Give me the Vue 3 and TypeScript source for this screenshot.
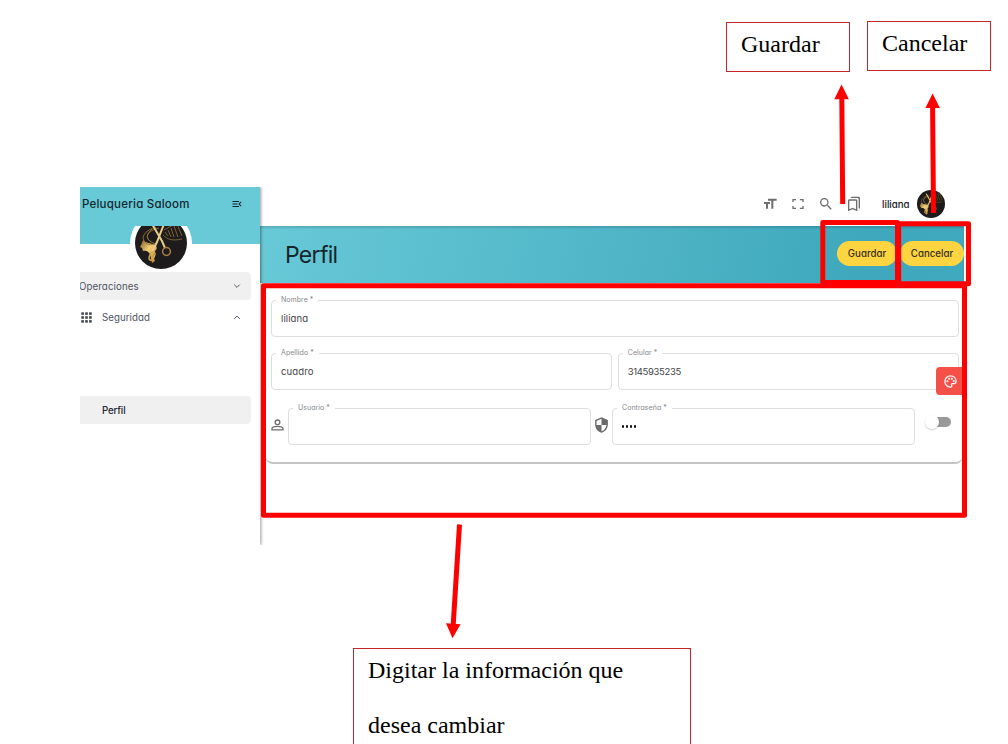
<script setup lang="ts">
interface Note { id: string; lines: string[] }

const notes: Note[] = [
  { id: 'save', lines: ['Guardar'] },
  { id: 'cancel', lines: ['Cancelar'] },
  { id: 'form', lines: ['Digitar la información que', 'desea cambiar'] },
]
const gridDots: number[] = [4, 10, 16]
</script>

<template>
  <div class="page">
    <svg class="defs" width="0" height="0" aria-hidden="true">
      <defs>
        <linearGradient id="gold" x1="0" y1="0" x2="1" y2="1">
          <stop offset="0" stop-color="#7d5a24" />
          <stop offset=".45" stop-color="#f3cf78" />
          <stop offset="1" stop-color="#b17b25" />
        </linearGradient>
        <symbol id="salon" viewBox="0 0 52 52">
          <circle cx="26" cy="26" r="26" fill="#1d1b1b" />
          <path d="M8 23c-1 3-2 5-3 7l2 1 1 3c3-1 5 0 7 3l2 9 3-2c-2-5-1-7 0-10 3-2 2-6-2-7-4-1-7-1-10-4z" fill="url(#gold)" />
          <path d="M21 10C11 13 6 19 9 24s10 4 13 2M24 11c-12 3-15 9-8 14M17 12c-8 7-5 12 4 15" fill="none" stroke="#9a7436" stroke-width=".9" />
          <path d="M17 7l10 17 3 7M29 7l-7 18-5 10" fill="none" stroke="#e9cb89" stroke-width="2" />
          <ellipse cx="17" cy="39" rx="2.300" ry="4.500" transform="rotate(25 17 39)" fill="none" stroke="#d6a84b" stroke-width="1.500" />
          <circle cx="31.500" cy="34.500" r="3.900" fill="none" stroke="#a98142" stroke-width="1.500" />
          <path d="M29 13l13-7M30 15l3 4M33 13l3 7M36 11l3 9M39 9l4 11M42 7l5 12M28 18c5 5 10 6 19 4" fill="none" stroke="#80602f" stroke-width="1" />
        </symbol>
      </defs>
    </svg>

    <div class="app">
      <aside class="sidebar">
        <div class="brand">
          <span class="brand-name">Peluqueria Saloom</span>
          <svg class="menu-icon" viewBox="0 0 24 24"><path d="M3 18h13v-2H3v2zM3 13h10v-2H3v2zm0-7v2h13V6H3zm18 9.6L17.4 12 21 8.4 19.6 7l-5 5 5 5 1.4-1.4z" /></svg>
        </div>
        <div class="profile"><div class="ring"><svg class="logo"><use href="#salon" /></svg></div></div>
        <nav class="nav">
          <div class="item filled operations">
            <span class="operations-text">Operaciones</span>
            <svg class="chevron" viewBox="0 0 10 10"><path d="M2.200 3.600L5 6.400l2.800-2.800" /></svg>
          </div>
          <div class="item security">
            <svg class="dots" viewBox="0 0 20 20"><template v-for="y in gridDots" :key="y"><rect v-for="x in gridDots" :key="x" :x="x - 2" :y="y - 2" width="4" height="4" /></template></svg>
            <span class="security-text">Seguridad</span>
            <svg class="chevron" viewBox="0 0 10 10"><path d="M2.200 6.900L5 4.100l2.800 2.800" /></svg>
          </div>
          <div class="item filled current"><span class="current-text">Perfil</span></div>
        </nav>
      </aside>

      <main class="main">
        <header class="toolbar">
          <svg class="tool" viewBox="0 0 24 24"><path d="M9 4v3h5v12h3V7h5V4H9zm-6 8h3v7h3v-7h3V9H3v3z" /></svg>
          <svg class="tool" viewBox="0 0 24 24"><path d="M5 9H3.500V4.500H9V6.500H5.500V9H5zM15 4.500h5.500V9h-2V6.500H15v-2zM3.500 15h2v2.500H9v2H3.500V15zm15 0h2v4.500H15v-2h3.500V15z" /></svg>
          <svg class="tool" viewBox="0 0 24 24"><path d="M15.500 14h-.8l-.3-.3A6.500 6.500 0 1 0 13.700 14.400l.3.3v.8l5 5 1.500-1.500-5-5zM9.500 14a4.500 4.500 0 1 1 0-9 4.500 4.500 0 0 1 0 9z" /></svg>
          <svg class="tool" viewBox="0 0 24 24"><path d="M15 7v13l-5-2.200L5 20V7h10m4-6H8.990C7.890 1 7 1.900 7 3h10c1.100 0 2 .9 2 2v13l2 1V3c0-1.100-.9-2-2-2zm-4 4H5c-1.100 0-2 .9-2 2v16l7-3 7 3V7c0-1.100-.9-2-2-2z" /></svg>
          <span class="user">liliana</span>
          <svg class="avatar"><use href="#salon" /></svg>
        </header>
        <section class="band">
          <h1>Perfil</h1>
          <button class="save">Guardar</button>
          <button class="cancel">Cancelar</button>
        </section>
        <form class="card">
          <div class="row">
            <div class="field"><label>Nombre *</label><span class="name-value">liliana</span></div>
          </div>
          <div class="row">
            <div class="field"><label>Apellido *</label><span class="last-value">cuadro</span></div>
            <div class="field"><label>Celular *</label><span class="phone-value">3145935235</span></div>
          </div>
          <div class="row access">
            <svg class="person" viewBox="0 0 24 24"><circle cx="12" cy="7" r="4.300" /><path d="M1.800 21v-2c0-6 20.400-6 20.400 0v2z" /></svg>
            <div class="field"><label class="wide-label">Usuario *</label></div>
            <svg class="shield" viewBox="0 0 24 24"><path d="M12 1L3 5v6c0 5.550 3.840 10.740 9 12 5.160-1.260 9-6.450 9-12V5l-9-4zm0 10.990h7c-.53 4.120-3.280 7.790-7 8.940V12H5V6.300l7-3.110v8.800z" /></svg>
            <div class="field"><label class="pass-label">Contraseña *</label><span class="dots-value"><i v-for="n in 4" :key="n" /></span></div>
            <div class="switch"><i /></div>
          </div>
        </form>
        <div class="theme"><svg viewBox="0 0 24 24"><path d="M12 3a9 9 0 0 0 0 18c2 0 2.700-1.600 1.800-3-.8-1.300 0-2.500 1.500-2.500H17c2.500 0 4-1.800 4-4C21 6.500 17 3 12 3z" /><circle cx="7" cy="11.500" r=".7" /><circle cx="9.800" cy="7.600" r=".7" /><circle cx="14.200" cy="7.600" r=".7" /><circle cx="17.200" cy="11.300" r=".7" /></svg></div>
      </main>
    </div>

    <svg class="marks" viewBox="0 0 1008 744">
      <g fill="none" stroke="#fe0000" stroke-width="5" stroke-linejoin="round">
        <rect x="263.500" y="285.800" width="701" height="229.500" />
        <rect x="822.800" y="222.500" width="74.700" height="60" />
        <rect x="898.700" y="223.700" width="69.800" height="60" />
        <path d="M841.800 98L842.700 204M932.600 106L933.500 213M459.500 524.500L453.200 625" />
      </g>
      <g fill="#fe0000">
        <path d="M841.500 84.500l7.400 14.800h-14.600z" />
        <path d="M932.600 93.500l7.300 14.600h-14.500z" />
        <path d="M452.500 638.300l-6.500-15 14.600.9z" />
      </g>
    </svg>

    <div v-for="note in notes" :key="note.id" class="note" :class="note.id">
      <div v-for="line in note.lines" :key="line">{{ line }}</div>
    </div>
  </div>
</template>

<style>
body { margin: 0; overflow: hidden; background: #fff; }
</style>

<style scoped>
* { box-sizing: border-box; }
.page { position: relative; width: 1008px; height: 744px; overflow: hidden; padding: 187px 0 0 80px; background: #fff; font-family: Inter, "Open Sans", sans-serif; font-feature-settings: "cv11"; color: #2c3037; }
.defs { position: absolute; }
.app { display: flex; width: 885px; height: 358px; }
.sidebar { width: 180px; height: 358px; box-shadow: 1px 0 3px #0006; clip-path: inset(0 -4px 0 0); background: #fff; z-index: 1; }
.brand { height: 39px; background: #68c9d7; display: flex; align-items: center; padding: 0 17px 5px 2px; justify-content: space-between; color: #14272d; }
.brand-name { font-size: 11.500px; font-weight: 500; letter-spacing: .22px; white-space: nowrap; }
.menu-icon { width: 12px; height: 12px; fill: #14272d; }
.profile { height: 46px; overflow: hidden; background: linear-gradient(#68c9d7 18px, #fff 18px); display: flex; justify-content: center; padding-right: 18px; }
.ring { width: 62px; height: 62px; flex: none; margin-top: -14px; border-radius: 50%; padding: 5px; background: #fff; }
.logo { width: 52px; height: 52px; display: block; }
.nav { width: 171px; }
.item { display: flex; height: 28px; align-items: center; padding-right: 9px; font-size: 9.700px; color: #4e5260; }
.filled { background: #f0f0f0; border-radius: 0 4px 4px 0; }
.operations-text { margin-left: -1px; letter-spacing: .1px; }
.chevron { width: 10px; height: 10px; margin-left: auto; fill: none; stroke: #555966; stroke-width: 1; }
.security { margin-top: 3px; }
.dots { width: 13px; height: 13px; fill: #444856; margin-right: 9px; }
.security-text { letter-spacing: .05px; }
.current { margin-top: 65px; padding-left: 22px; font-weight: 500; color: #22252f; }
.current-text { letter-spacing: -.15px; }
.main { width: 705px; position: relative; }
.toolbar { height: 39px; display: flex; align-items: center; padding: 0 20px 5px 0; justify-content: flex-end; gap: 12px; }
.tool { width: 16px; height: 16px; fill: #6e6e70; }
.user { font-size: 9.700px; font-weight: 500; margin-left: 8px; width: 30px; color: #17191e; }
.avatar { width: 28px; height: 28px; margin-left: -7px; }
.band { width: 704px; height: 57px; background: linear-gradient(100deg, #68c9d7, #3fa8bc 85%, #40a9bd); box-shadow: inset 0 2px 2px #0002; display: flex; align-items: center; padding-left: 25px; }
h1 { margin: 0 auto 0 0; font-size: 23px; font-weight: 400; letter-spacing: -.7px; color: #14272d; }
button { border: 0; padding: 0; height: 25px; border-radius: 13px; background: #fed440; font: 500 9.700px Inter, sans-serif; font-feature-settings: "cv11"; color: #352f20; margin-top: -3px; }
.save { width: 60px; margin-right: 3px; }
.cancel { width: 64px; }
.card { margin: 3px 0 0 5px; width: 698px; height: 178px; padding: 14px 4px 0 6px; border-radius: 8px; border-bottom: 2px solid #c4c4c4; }
.row { display: flex; gap: 5.500px; height: 37px; margin-bottom: 16px; }
.field { position: relative; flex: 1; border: 1px solid #dedede; border-radius: 4px; display: flex; align-items: center; padding-left: 9px; font-size: 9.500px; color: #3f4248; }
.name-value { letter-spacing: .1px; }
.last-value { letter-spacing: .15px; }
.phone-value { letter-spacing: -.35px; }
label { position: absolute; left: 4px; top: -5px; line-height: 8px; padding: 0 5px; background: #fff; font-size: 7px; color: #85878b; white-space: nowrap; letter-spacing: .05px; }
.access { width: 644px; margin-top: 18px; gap: 0; align-items: stretch; }
.person { width: 13px; height: 16px; margin: 9px 4px 0 0; fill: none; stroke: #707070; stroke-width: 2.500; }
.shield { width: 17px; height: 18px; margin: 8px 2px 0 2px; fill: #6b6b6b; }
.dots-value { display: flex; gap: 1.500px; padding-left: 0; }
.dots-value i { width: 2.400px; height: 2.400px; border-radius: 50%; background: #111; }
.switch { position: absolute; left: 666px; top: 230px; width: 25px; height: 10px; border-radius: 5px; background: linear-gradient(90deg, transparent 8px, #999 8px); }
.switch i { position: absolute; left: -1px; top: -2px; width: 14px; height: 14px; border-radius: 50%; background: #fff; box-shadow: 0 1px 2px #0003; }
.theme { position: absolute; left: 676px; top: 180px; width: 28px; height: 28px; border-radius: 4px 0 0 4px; background: #f45047; display: flex; align-items: center; justify-content: center; }
.theme svg { width: 15px; height: 15px; fill: none; stroke: #fff; stroke-width: 2; }
.marks { position: absolute; inset: 0; width: 1008px; height: 744px; z-index: 2; }
.note { position: absolute; z-index: 3; border: 1px solid #c3262b; padding-left: 14px; background: #fff; font: 24px/55px "Liberation Serif", serif; color: #000; white-space: nowrap; }
.save.note { left: 726px; top: 22px; width: 124px; height: 50px; line-height: 43px; margin: 0; }
.cancel.note { left: 867px; top: 21px; width: 124px; height: 50px; line-height: 43px; margin: 0; }
.form.note { left: 353px; top: 648px; width: 338px; height: 110px; padding-top: 0; line-height: 55px; }
.form.note div:first-child { margin-top: -6px; }
</style>
